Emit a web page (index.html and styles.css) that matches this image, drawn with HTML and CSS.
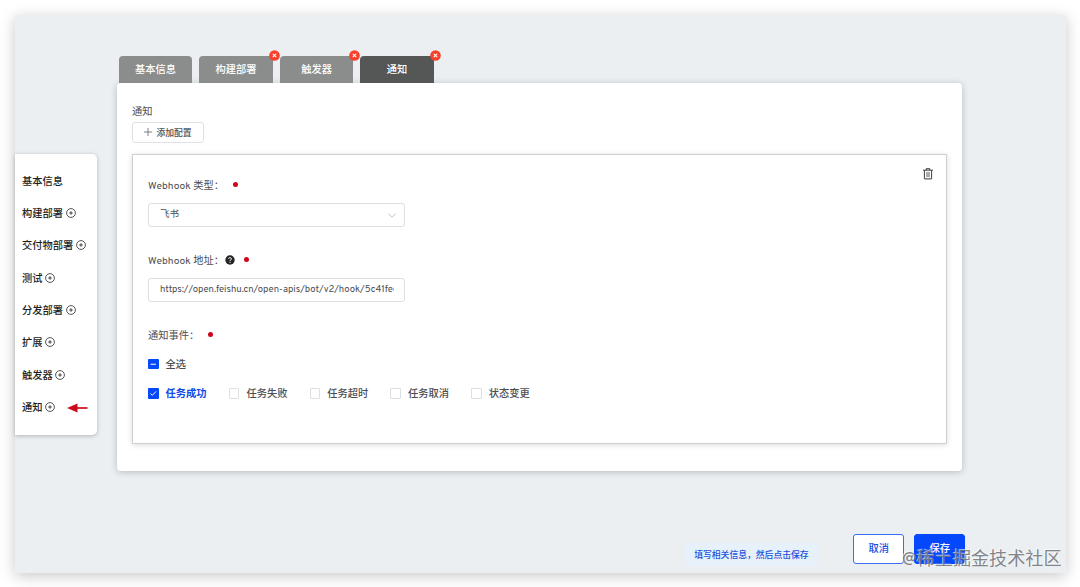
FILE: index.html
```html
<!DOCTYPE html>
<html lang="zh-CN">
<head>
    <meta charset="UTF-8">
    <meta name="viewport" content="width=device-width, initial-scale=1.0">
    <title>通知</title>
    <link rel="stylesheet" href="styles.css">
</head>
<body>
    <!-- Shared icons -->
    <svg class="icon-defs" width="0" height="0">
        <symbol id="plus-circle" viewBox="0 0 10 10">
            <circle cx="5" cy="5" r="4.4" fill="none" stroke="currentColor" stroke-width="0.75"/>
            <path d="M5 3.2V6.8M3.2 5H6.8" stroke="currentColor" stroke-width="0.8"/>
        </symbol>
        <symbol id="close" viewBox="0 0 11 11">
            <circle cx="5.5" cy="5.5" r="5.3" fill="#f8412c"/>
            <path d="M3.8 3.8L7.2 7.2M7.2 3.8L3.8 7.2" stroke="#fff" stroke-width="1.1"/>
        </symbol>
    </svg>

    <div class="window">
        <nav class="sidebar">
            <div class="step">基本信息</div>
            <div class="step">构建部署<svg class="plus"><use href="#plus-circle"/></svg></div>
            <div class="step">交付物部署<svg class="plus"><use href="#plus-circle"/></svg></div>
            <div class="step">测试<svg class="plus"><use href="#plus-circle"/></svg></div>
            <div class="step">分发部署<svg class="plus"><use href="#plus-circle"/></svg></div>
            <div class="step">扩展<svg class="plus"><use href="#plus-circle"/></svg></div>
            <div class="step">触发器<svg class="plus"><use href="#plus-circle"/></svg></div>
            <div class="step">通知<svg class="plus"><use href="#plus-circle"/></svg>
                <svg class="arrow" viewBox="0 0 21 10"><path d="M0 5L10.5 0.6V9.4Z" fill="#cb0a19"/><path d="M9 5H20.5" stroke="#cb0a19" stroke-width="1.7"/></svg>
            </div>
        </nav>

        <main class="main">
            <div class="tabs">
                <div class="tab">基本信息</div>
                <div class="tab">构建部署<svg class="close"><use href="#close"/></svg></div>
                <div class="tab">触发器<svg class="close"><use href="#close"/></svg></div>
                <div class="tab active">通知<svg class="close"><use href="#close"/></svg></div>
            </div>

            <section class="panel">
                <div class="panel-title">通知</div>
                <button class="add-btn">
                    <svg width="8" height="8" viewBox="0 0 8 8"><path d="M4 0V8M0 4H8" stroke="#606266" stroke-width="0.8"/></svg>
                    添加配置
                </button>

                <div class="config">
                    <svg class="trash" width="10" height="12" viewBox="0 0 10 12" fill="none" stroke="#3c3e42">
                        <path d="M0 2.2H10M3.2 2V0.7H6.8V2M1.4 2.4V10.9H8.6V2.4"/>
                        <path d="M3.8 4V9.2M5 4V9.2M6.2 4V9.2" stroke-width="0.6"/>
                    </svg>

                    <div class="label">Webhook 类型：<i class="dot"></i></div>
                    <div class="field select">
                        飞书
                        <svg width="8" height="5" viewBox="0 0 8 5"><path d="M0.3 0.4L4 4.3L7.7 0.4" fill="none" stroke="#b4b8c0" stroke-width="0.8"/></svg>
                    </div>

                    <div class="label">Webhook 地址：
                        <svg class="help" width="10" height="10" viewBox="0 0 10 10"><circle cx="5" cy="5" r="4.7" fill="#252525"/><path d="M3.5 4C3.5 2.2 6.5 2.2 6.5 3.9C6.5 4.9 5 4.8 5 6M5 6.8V7.8" fill="none" stroke="#fff" stroke-width="1"/></svg>
                        <i class="dot"></i>
                    </div>
                    <input class="field url" type="text" value="https://open.feishu.cn/open-apis/bot/v2/hook/5c41fee">

                    <div class="label">通知事件：<i class="dot"></i></div>
                    <div class="checks all">
                        <div class="check"><span class="box on"><svg viewBox="0 0 10 10"><path d="M2.5 5H7.5" stroke="#fff"/></svg></span>全选</div>
                    </div>
                    <div class="checks">
                        <div class="check checked"><span class="box on"><svg viewBox="0 0 10 10"><path d="M2.4 5.1L4.2 7L7.7 3.2" fill="none" stroke="#fff" stroke-width="0.9"/></svg></span>任务成功</div>
                        <div class="check"><span class="box"></span>任务失败</div>
                        <div class="check"><span class="box"></span>任务超时</div>
                        <div class="check"><span class="box"></span>任务取消</div>
                        <div class="check"><span class="box"></span>状态变更</div>
                    </div>
                </div>
            </section>

            <footer class="actions">
                <span class="hint">填写相关信息，然后点击保存</span>
                <button class="btn">取消</button>
                <button class="btn primary">保存</button>
            </footer>
        </main>

        <div class="watermark">@稀土掘金技术社区</div>
    </div>
</body>
</html>
```
FILE: styles.css
```css
* {
    box-sizing: border-box;
}
body {
    margin: 0;
    padding: 15px 15px 14px 14.5px;
    height: 587px;
    overflow: hidden;
    background-color: #fff;
    font-family: Overpass, "Open Sans", "Noto Sans CJK SC", sans-serif;
    font-size: 10.25px;
    color: #4c4e52;
}
button, input {
    font-family: inherit;
    color: inherit;
}
.icon-defs {
    position: absolute;
}
.window {
    position: relative;
    display: flex;
    align-items: flex-start;
    width: 1051px;
    height: 558px;
    background-color: #ebeff2;
    box-shadow: 0 3px 14px rgba(0, 0, 0, 0.22);
}

/* Left step list */
.sidebar {
    width: 82.9px;
    height: 281.5px;
    margin-top: 138.5px;
    padding: 11px 0 0 7.5px;
    border-radius: 0 5px 5px 0;
    background-color: #fff;
    box-shadow: 0 1px 4px rgba(0, 0, 0, 0.25);
    color: #1c1e22;
    font-weight: 500;
}
.step {
    display: flex;
    align-items: center;
    height: 32.35px;
}
.plus {
    width: 10px;
    height: 10px;
    margin-left: 2.5px;
}
.arrow {
    width: 21px;
    height: 10px;
    margin: 2px 0 0 11.5px;
}

/* Tabs */
.main {
    width: 848px;
    margin: 41px 0 0 20px;
}
.tabs {
    display: flex;
    gap: 7px;
    padding-left: 1.4px;
}
.tab {
    position: relative;
    width: 73.5px;
    height: 26.5px;
    line-height: 29px;
    border-radius: 4px 4px 0 0;
    background-color: #8b8d8d;
    color: #fff;
    font-weight: 500;
    text-align: center;
}
.tab.active {
    background-color: #555656;
}
.close {
    position: absolute;
    top: -6px;
    right: -7px;
    width: 11px;
    height: 11px;
}

/* Main panel */
.panel {
    width: 844.8px;
    height: 388px;
    padding: 20px 15px 0 14.7px;
    border-radius: 4px;
    background-color: #fff;
    box-shadow: 0 1px 7px rgba(0, 0, 0, 0.22);
}
.panel-title {
    height: 19px;
    line-height: 19px;
}
.add-btn {
    display: flex;
    align-items: center;
    justify-content: center;
    gap: 4px;
    width: 72px;
    height: 21px;
    padding: 0;
    border: 1px solid #dfe1e5;
    border-radius: 3px;
    background-color: #fff;
    font-size: 8.8px;
    font-weight: 500;
}
.config {
    position: relative;
    width: 815px;
    height: 290px;
    margin-top: 11.5px;
    padding: 19.5px 15px;
    border: 1px solid #cdcfd1;
    box-shadow: 0 1px 6px rgba(0, 0, 0, 0.14);
}
.trash {
    position: absolute;
    top: 13px;
    right: 13px;
}
.label {
    display: flex;
    align-items: center;
    height: 20px;
}
.dot {
    width: 5px;
    height: 5px;
    margin-left: 9px;
    border-radius: 50%;
    background-color: #d0021b;
}
.help {
    margin-left: 1.5px;
}
.field {
    display: flex;
    align-items: center;
    justify-content: space-between;
    width: 257px;
    height: 24px;
    margin: 8px 0 23px;
    padding: 0 10.5px 0 11px;
    border: 1px solid #dcdfe3;
    border-radius: 3px;
    background-color: #fff;
    font-size: 9.5px;
}
.select {
    padding-bottom: 2px;
}
.select svg {
    margin: 3px -2px 0 0;
}
.url {
    padding-top: 1px;
}
.checks {
    display: flex;
    height: 29.5px;
    align-items: center;
}
.checks.all {
    margin-top: 4.5px;
}
.check {
    display: flex;
    align-items: center;
    width: 80.8px;
    font-weight: 500;
}
.checked {
    color: #0f4be8;
    font-weight: 700;
}
.box {
    display: flex;
    width: 10.5px;
    height: 10.5px;
    margin-right: 7px;
    border: 1px solid #dcdfe3;
    border-radius: 1px;
}
.box.on {
    border: none;
    background-color: #0548fb;
}

/* Bottom actions */
.actions {
    display: flex;
    align-items: flex-start;
    justify-content: flex-end;
    margin-top: 63px;
}
.hint {
    width: 133px;
    height: 23px;
    margin: 9px 35px 0 0;
    border-radius: 3px;
    background-color: #e7f1fb;
    color: #1a52dc;
    font-size: 8.8px;
    font-weight: 500;
    line-height: 25px;
    text-align: center;
}
.btn {
    width: 51.5px;
    height: 30px;
    padding: 0 0 1px;
    border: 1px solid #376df0;
    border-radius: 3px;
    background-color: #fff;
    color: #1450e8;
    font-size: 10.25px;
    font-weight: 500;
}
.btn.primary {
    margin-left: 9.5px;
    border-color: #0548fb;
    background-color: #0548fb;
    color: #fff;
}
.watermark {
    position: absolute;
    right: 4px;
    bottom: -1px;
    color: rgba(110, 113, 118, 0.85);
    font-size: 18.1px;
    line-height: 26px;
    text-shadow: -1px -1px 0 rgba(255, 255, 255, 0.6);
}
```
